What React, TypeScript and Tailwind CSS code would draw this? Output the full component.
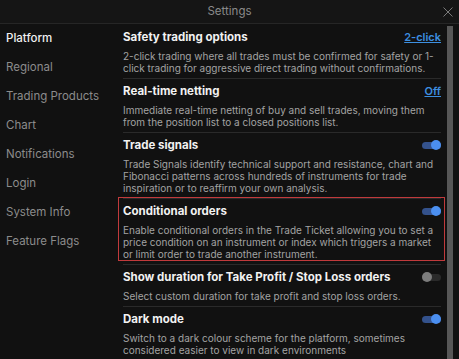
import React from "react";

type Row = {
  title: string;
  desc: string;
  link?: string;
  toggle?: boolean;
  highlight?: boolean;
};

const menu = [
  "Platform",
  "Regional",
  "Trading Products",
  "Chart",
  "Notifications",
  "Login",
  "System Info",
  "Feature Flags",
];

const rows: Row[] = [
  {
    title: "Safety trading options",
    desc: "2-click trading where all trades must be confirmed for safety or 1-click trading for aggressive direct trading without confirmations.",
    link: "2-click",
  },
  {
    title: "Real-time netting",
    desc: "Immediate real-time netting of buy and sell trades, moving them from the position list to a closed positions list.",
    link: "Off",
  },
  {
    title: "Trade signals",
    desc: "Trade Signals identify technical support and resistance, chart and Fibonacci patterns across hundreds of instruments for trade inspiration or to reaffirm your own analysis.",
    toggle: true,
  },
  {
    title: "Conditional orders",
    desc: "Enable conditional orders in the Trade Ticket allowing you to set a price condition on an instrument or index which triggers a market or limit order to trade another instrument.",
    toggle: true,
    highlight: true,
  },
  {
    title: "Show duration for Take Profit / Stop Loss orders",
    desc: "Select custom duration for take profit and stop loss orders.",
    toggle: false,
  },
  {
    title: "Dark mode",
    desc: "Switch to a dark colour scheme for the platform, sometimes considered easier to view in dark environments",
    toggle: true,
  },
];

function Toggle({ on }: { on: boolean }) {
  return (
    <div className="relative w-[19px] h-[10px] flex items-center">
      <div
        className={`w-full h-[7px] rounded-full ${on ? "bg-[#34528c]" : "bg-[#2a2a2a]"}`}
      />
      <div
        className={`absolute top-0 w-[10px] h-[10px] rounded-full ${
          on ? "right-0 bg-[#4b8ff0]" : "left-0 bg-[#7c7c7c]"
        }`}
      />
    </div>
  );
}

export default function App() {
  return (
    <div
      className="w-[459px] h-[359px] bg-[#111111] overflow-hidden flex flex-col"
      style={{ fontFamily: "Inter, 'Liberation Sans', sans-serif" }}
    >
      <header className="relative h-[24px] shrink-0 bg-[#151515] border-b border-[#262626] flex items-center justify-center">
        <span className="text-[11.5px] text-[#8a8a8a]">Settings</span>
        <svg
          className="absolute right-[6px] top-[7px]"
          width="10"
          height="10"
          viewBox="0 0 10 10"
          stroke="#7a7a7a"
          strokeWidth="1"
        >
          <path d="M0.5 0.5 L9.5 9.5 M9.5 0.5 L0.5 9.5" />
        </svg>
      </header>

      <div className="flex flex-1 min-h-0">
        <nav className="w-[118px] shrink-0 pl-[6px]">
          {menu.map((m, i) => (
            <div
              key={m}
              className={`h-[29px] flex items-center text-[11.5px] ${
                i === 0 ? "text-[#f0f0f0] font-medium" : "text-[#8c8c8c]"
              }`}
            >
              {m}
            </div>
          ))}
        </nav>

        <main className="w-[328px] shrink-0 px-[5px] pt-[1px]">
          {rows.map((r) => (
            <section
              key={r.title}
              className="relative pt-[4px] pb-[4px] border-b border-[#2a2a2a]"
            >
              {r.highlight && (
                <div className="absolute -left-[5px] -right-[4px] -top-[2px] bottom-[3px] border-[1.5px] border-[#c13a3c] pointer-events-none" />
              )}
              <div className="flex items-center justify-between h-[16px]">
                <h3 className="text-[11.5px] leading-[16px] font-bold text-[#f2f2f2]">
                  {r.title}
                </h3>
                {r.link && (
                  <a className="text-[11px] font-semibold text-[#3d8fe0] underline">
                    {r.link}
                  </a>
                )}
                {r.toggle !== undefined && <Toggle on={r.toggle} />}
              </div>
              <p className="mt-[5px] text-[10px] leading-[12px] text-[#a3a3a3]">
                {r.desc}
              </p>
            </section>
          ))}
        </main>

        <div className="w-[6px] ml-[1px] mt-[2px] bg-[#575757]" />
      </div>
    </div>
  );
}
